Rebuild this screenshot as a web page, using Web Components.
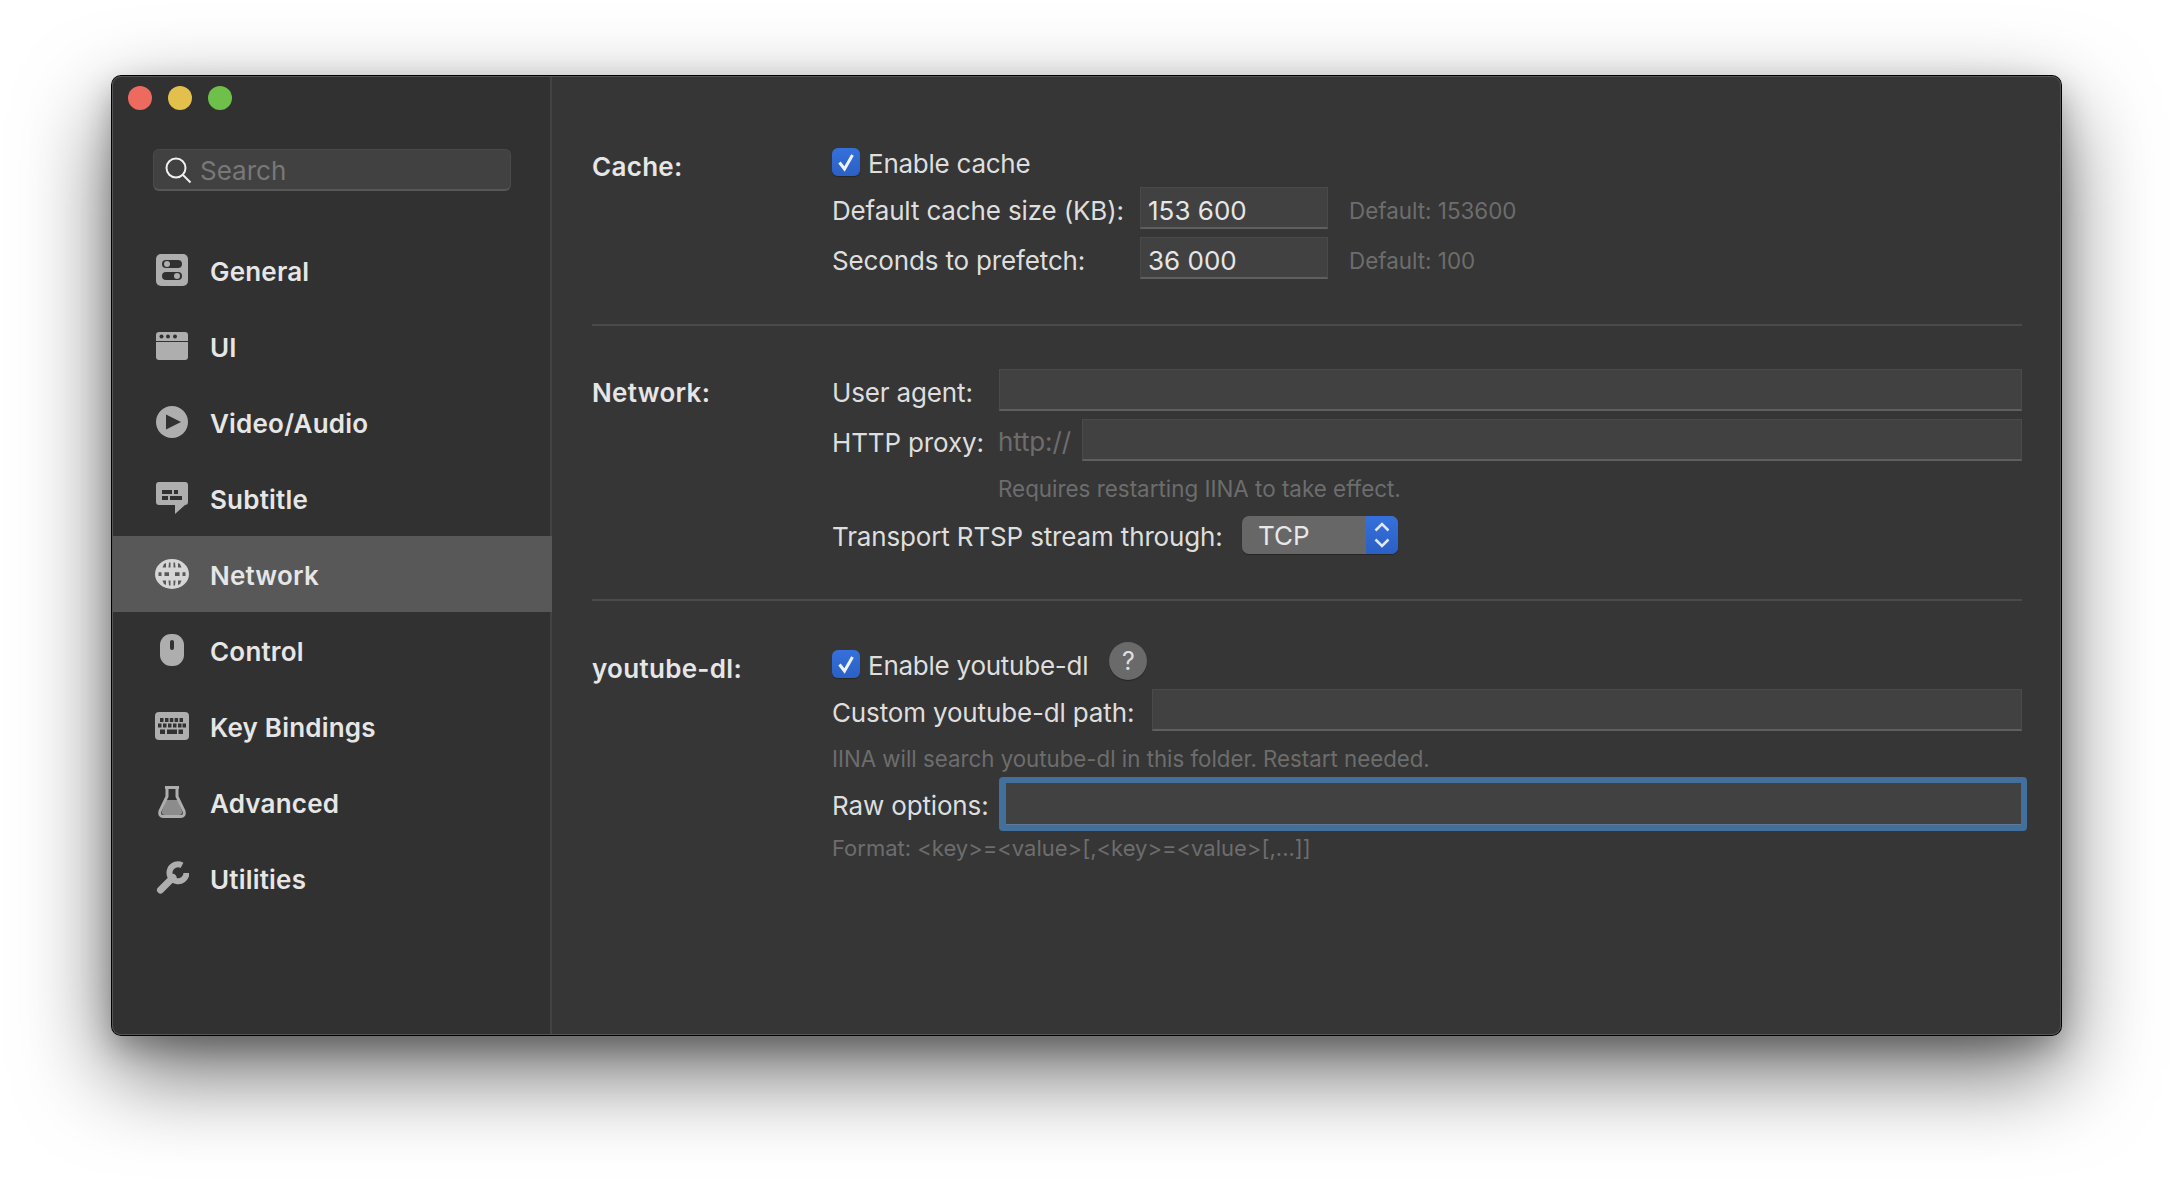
<!DOCTYPE html>
<html>
<head>
<meta charset="utf-8">
<title>IINA preferences</title>
<style>
html, body { margin:0; height:100%; background:#fff; overflow:hidden; }
body { font-family:Inter, "Liberation Sans", sans-serif; }
</style>
</head>
<body>
<pref-window>
  <side-bar slot="side">
    <side-item icon="general">General</side-item>
    <side-item icon="ui">UI</side-item>
    <side-item icon="video">Video/Audio</side-item>
    <side-item icon="subtitle">Subtitle</side-item>
    <side-item icon="network" selected>Network</side-item>
    <side-item icon="control">Control</side-item>
    <side-item icon="keys">Key Bindings</side-item>
    <side-item icon="advanced">Advanced</side-item>
    <side-item icon="utilities">Utilities</side-item>
  </side-bar>

  <pref-section label="Cache:" style="padding:72px 0 45px;--label-top:1px">
    <pref-row style="height:28px"><check-box>Enable cache</check-box></pref-row>
    <pref-row label="Default cache size (KB):" width="308" style="margin-top:11px">
      <text-field style="width:188px">153 600</text-field><hint-text class="wide" style="margin-left:21px;padding-top:5px">Default: 153600</hint-text>
    </pref-row>
    <pref-row label="Seconds to prefetch:" width="308" style="margin-top:8px">
      <text-field style="width:188px">36 000</text-field><hint-text class="wide" style="margin-left:21px;padding-top:5px">Default: 100</hint-text>
    </pref-row>
  </pref-section>

  <pref-section label="Network:" style="padding:43px 0 45px;--label-top:6px">
    <pref-row label="User agent:" width="167"><text-field class="grow"></text-field></pref-row>
    <pref-row label="HTTP proxy:" width="166" style="margin-top:8px">
      <hint-text style="font-size:26px;width:84px;padding-top:2px;letter-spacing:-.15px">http://</hint-text><text-field class="grow"></text-field>
    </pref-row>
    <pref-row style="height:28px;margin-top:13px;padding-left:166px"><hint-text class="wide">Requires restarting IINA to take effect.</hint-text></pref-row>
    <pref-row label="Transport RTSP stream through:" width="410" style="height:38px;margin-top:14px;--label-shift:3px"><pop-up>TCP</pop-up></pref-row>
  </pref-section>

  <pref-section label="youtube-dl:" style="padding:49px 0 0;border:0;--label-top:1px">
    <pref-row style="height:28px"><check-box>Enable youtube-dl</check-box><help-button></help-button></pref-row>
    <pref-row label="Custom youtube-dl path:" width="320" style="margin-top:11px"><text-field class="grow"></text-field></pref-row>
    <pref-row style="height:28px;margin-top:13px"><hint-text style="font-size:22.28px">IINA will search youtube-dl in this folder. Restart needed.</hint-text></pref-row>
    <pref-row label="Raw options:" width="167" style="height:54px;margin-top:5px;margin-right:-5px;--label-shift:3px"><text-field class="grow" focused></text-field></pref-row>
    <pref-row style="height:28px;margin-top:3px"><hint-text>Format: &lt;key&gt;=&lt;value&gt;[,&lt;key&gt;=&lt;value&gt;[,...]]</hint-text></pref-row>
  </pref-section>
</pref-window>

<script>
const FILL = 'currentColor'

// icons are on a 34x34 box, centred on the row
const ICONS = {
  general: `<rect x="1" y="1" width="32" height="32" rx="5" fill="${FILL}"/>
    <rect x="7" y="7" width="20" height="8" rx="4" fill="#313131"/><circle cx="12" cy="11" r="3" fill="${FILL}"/>
    <rect x="7" y="19" width="20" height="8" rx="4" fill="#313131"/><circle cx="22" cy="23" r="3" fill="${FILL}"/>`,
  ui: `<path d="M1 12V6a3 3 0 0 1 3-3h26a3 3 0 0 1 3 3v6z" fill="${FILL}"/>
    <path d="M1 13h32v15a3 3 0 0 1-3 3H4a3 3 0 0 1-3-3z" fill="${FILL}"/>
    <circle cx="6.500" cy="7.500" r="2" fill="#313131"/><circle cx="13" cy="7.500" r="2" fill="#313131"/><circle cx="20" cy="7.500" r="2" fill="#313131"/>`,
  video: `<circle cx="17" cy="17" r="16" fill="${FILL}"/><path d="M11 9.500L26 17 11 24.500z" fill="#313131"/>`,
  subtitle: `<path d="M4 1h26a3 3 0 0 1 3 3v17a3 3 0 0 1-3 3l-10 9v-9H4a3 3 0 0 1-3-3V4a3 3 0 0 1 3-3z" fill="${FILL}"/>
    <path d="M7 9h10v4H7zM19 9h4v4h-4zM7 15h6v4H7zM15 15h12v4H15z" fill="#313131"/>`,
  network: `<ellipse cx="17" cy="17" rx="17" ry="15" fill="${FILL}"/>
    <path d="M3.500 15.300h3v3.600h-3zM9.500 15.300h4.500v3.600H9.500zM20 15.300h4.500v3.600H20zM27.500 15.300h3v3.600h-3z
      M9 7l2-1v4.500H7.500zM14 5.500h1.500v5H13.500zM18.500 5.500H20l.5 5h-2zM23 6l2 1 1.500 3.500H23z
      M7.500 23.500H11V28l-2-1zM13.500 23.500h2v5H14zM18.500 23.500h2l-.5 5h-1.500zM23 23.500h3.500L25 27l-2 1z" fill="#585858"/>`,
  control: `<rect x="5" y="1" width="24" height="32" rx="11" fill="${FILL}"/><rect x="15" y="7" width="4" height="10" rx="2" fill="#313131"/>`,
  keys: `<rect x="0" y="3" width="34" height="28" rx="4" fill="${FILL}"/>
    <path d="M5 9h3.500v4H5zM10 9h3.500v4H10zM14.800 9h3.500v4h-3.500zM19.600 9h3.500v4h-3.500zM24.500 9H28v4h-3.500z
      M3 14.500h3.500v4H3zM8 14.500h3.500v4H8zM13 14.500h3.500v4H13zM18 14.500h3.500v4H18zM23 14.500h3.500v4H23zM27.500 14.500H31v4h-3.500z
      M5 20.500h5V25H5zM12 20.500h10V25H12zM23.500 20.500H28V25h-4.500z" fill="#313131"/>`,
  advanced: `<path d="M11 15L7 26q-1 4 3 4h14q4 0 3-4l-4-11z" fill="#8c8c8c"/>
    <path d="M10 2.500h14M12 2.500v9L5 26q-1.500 5 3 5.500h18q4.500-.5 3-5.500l-7-14.500v-9" fill="none" stroke="${FILL}" stroke-width="3"/>`,
  utilities: `<path d="M5.500 29L18 16.500" stroke="${FILL}" stroke-width="7" stroke-linecap="round" fill="none"/>
    <path d="M27 4.300A8.500 8.500 0 1 0 31.500 12" stroke="${FILL}" stroke-width="6" fill="none"/>`
}

const windowTemplate = document.createElement('template')
windowTemplate.innerHTML = `
<style>
:host {
  display:flex;
  box-sizing:border-box;
  width:1949px;
  height:959px;
  margin:76px 0 0 112px;
  border-radius:9px;
  background:#363636;
  box-shadow:0 0 0 1px #000, 0 36px 90px rgba(0,0,0,.6), 0 12px 30px rgba(0,0,0,.25);
  position:relative;
}
#side { width:440px; flex:none; background:#313131; border-radius:9px 0 0 9px; box-shadow:inset -2px 0 #434343; }
#main { flex:1; padding:0 39px 0 40px; min-width:0; }
#rim { position:absolute; inset:0; border-radius:9px; box-shadow:inset 0 0 0 1px #555; pointer-events:none; }
</style>
<div id="side"><slot name="side"></slot></div>
<div id="main"><slot></slot></div>
<div id="rim"></div>
`
customElements.define('pref-window', class extends HTMLElement {
  constructor() {
    super()
    this.attachShadow({ mode: 'open' }).appendChild(windowTemplate.content.cloneNode(true))
  }
})

const sideTemplate = document.createElement('template')
sideTemplate.innerHTML = `
<style>
:host { display:block; }
#lights { display:flex; gap:16px; padding:10px 0 0 16px; }
#lights i { width:24px; height:24px; border-radius:50%; }
#search {
  display:flex; align-items:center; box-sizing:border-box;
  width:358px; height:42px; margin:39px 0 41px 41px; padding-left:10px;
  background:#414141; border:1px solid #4b4b4b; border-bottom:2px solid #575757; border-radius:6px;
  color:#787878; font-size:26px;
}
#search svg { width:28px; height:28px; margin-right:8px; flex:none; }
#search span { padding-top:2px; }
</style>
<div id="lights">
  <i style="background:#ed6a5e"></i><i style="background:#e3bf4c"></i><i style="background:#6fc04b"></i>
</div>
<div id="search">
  <svg viewBox="0 0 28 28"><circle cx="12" cy="12" r="9.500" fill="none" stroke="#f0f0f0" stroke-width="2"/><path d="M19 19l7.500 7.500" stroke="#f0f0f0" stroke-width="2"/></svg>
  <span>Search</span>
</div>
<slot></slot>
`
customElements.define('side-bar', class extends HTMLElement {
  constructor() {
    super()
    this.attachShadow({ mode: 'open' }).appendChild(sideTemplate.content.cloneNode(true))
  }
})

customElements.define('side-item', class extends HTMLElement {
  constructor() {
    super()
    const icon = ICONS[this.getAttribute('icon')] || ''
    this.attachShadow({ mode: 'open' }).innerHTML = `
    <style>
    :host {
      display:flex; align-items:center; height:76px; padding-left:43px;
      color:#e6e6e6; font-size:26px; font-weight:600; letter-spacing:.2px;
    }
    :host([selected]) { background:#585858; }
    svg { width:34px; height:34px; margin-right:21px; flex:none; color:#aeaeae; }
    :host([selected]) svg { color:#d6d6d6; }
    span { padding-top:2px; }
    </style>
    <svg viewBox="0 0 34 34">${icon}</svg><span><slot></slot></span>`
  }
})

customElements.define('pref-section', class extends HTMLElement {
  constructor() {
    super()
    this.attachShadow({ mode: 'open' }).innerHTML = `
    <style>
    :host { display:flex; border-bottom:2px solid #4a4a4a; }
    #label {
      width:240px; flex:none; padding-top:var(--label-top, 0); box-sizing:border-box;
      color:#e6e6e6; font-size:26px; font-weight:600; line-height:36px; letter-spacing:.3px;
    }
    #rows { flex:1; min-width:0; }
    </style>
    <div id="label">${this.getAttribute('label')}</div>
    <div id="rows"><slot></slot></div>`
  }
})

customElements.define('pref-row', class extends HTMLElement {
  constructor() {
    super()
    const label = this.getAttribute('label')
    const width = this.getAttribute('width')
    this.attachShadow({ mode: 'open' }).innerHTML = `
    <style>
    :host { display:flex; align-items:center; height:42px; color:#dedede; font-size:26px; letter-spacing:-.15px; }
    #label { flex:none; white-space:nowrap; box-sizing:border-box; padding-top:var(--label-shift, 5px); }
    ::slotted(.grow) { flex:1; min-width:0; }
    </style>
    ${label ? `<span id="label" style="width:${width}px">${label}</span>` : ''}<slot></slot>`
  }
})

customElements.define('text-field', class extends HTMLElement {
  constructor() {
    super()
    this.attachShadow({ mode: 'open' }).innerHTML = `
    <style>
    :host { display:block; box-sizing:border-box; }
    #box {
      box-sizing:border-box; height:42px; padding-left:7px;
      background:#414141; color:#e6e6e6; font-size:26px; line-height:45px; letter-spacing:0;
      border:1px solid #4a4a4a; border-bottom:2px solid #5f5f5f;
    }
    :host([focused]) { height:54px; border:6px solid #426f9c; border-left-width:7px; border-radius:4px; }
    :host([focused]) #box { border:0; border-bottom:1px solid #5c7a9c; height:100%; }
    </style>
    <div id="box"><slot></slot></div>`
  }
})

customElements.define('hint-text', class extends HTMLElement {
  constructor() {
    super()
    this.attachShadow({ mode: 'open' }).innerHTML = `
    <style>
    :host { display:block; flex:none; color:#6d6d6d; font-size:22px; letter-spacing:0; white-space:nowrap; }
    :host(.wide) { font-size:22.4px; }
    </style>
    <slot></slot>`
  }
})

customElements.define('check-box', class extends HTMLElement {
  constructor() {
    super()
    this.attachShadow({ mode: 'open' }).innerHTML = `
    <style>
    :host { display:flex; align-items:center; color:#dedede; font-size:26px; letter-spacing:-.25px; white-space:nowrap; }
    #box {
      width:28px; height:28px; margin-right:8px; flex:none; border-radius:6px;
      background:linear-gradient(#3570dc, #2b60c4); box-shadow:0 1px 1px rgba(0,0,0,.3);
    }
    svg { display:block; width:28px; height:28px; }
    span { padding-top:3px; }
    </style>
    <div id="box"><svg viewBox="0 0 28 28"><path d="M7.500 14.500l5 6.500 8-14" fill="none" stroke="#eef3fc" stroke-width="3"/></svg></div>
    <span><slot></slot></span>`
  }
})

customElements.define('help-button', class extends HTMLElement {
  constructor() {
    super()
    this.attachShadow({ mode: 'open' }).innerHTML = `
    <style>
    :host {
      display:flex; align-items:center; justify-content:center; flex:none;
      width:38px; height:38px; margin:-6px 0 0 21px; border-radius:50%;
      background:#6a6a6a; color:#dedede; font-size:25px; box-shadow:0 1px 1px rgba(0,0,0,.3);
    }
    </style>
    ?`
  }
})

customElements.define('pop-up', class extends HTMLElement {
  constructor() {
    super()
    this.attachShadow({ mode: 'open' }).innerHTML = `
    <style>
    :host {
      display:flex; width:156px; height:38px; border-radius:7px; overflow:hidden; letter-spacing:0;
      background:#676767; color:#e8e8e8; font-size:26px; box-shadow:0 1px 1px rgba(0,0,0,.3);
    }
    #value { flex:1; padding-left:16px; line-height:40px; }
    #arrows { width:32px; background:linear-gradient(#3570dc, #2b60c4); }
    svg { display:block; width:32px; height:38px; }
    </style>
    <div id="value"><slot></slot></div>
    <div id="arrows"><svg viewBox="0 0 32 38"><path d="M9.500 14.500L16 8l6.500 6.500M9.500 23.500L16 30l6.500-6.500" fill="none" stroke="#dfe8fa" stroke-width="2.500"/></svg></div>`
  }
})
</script>
</body>
</html>
